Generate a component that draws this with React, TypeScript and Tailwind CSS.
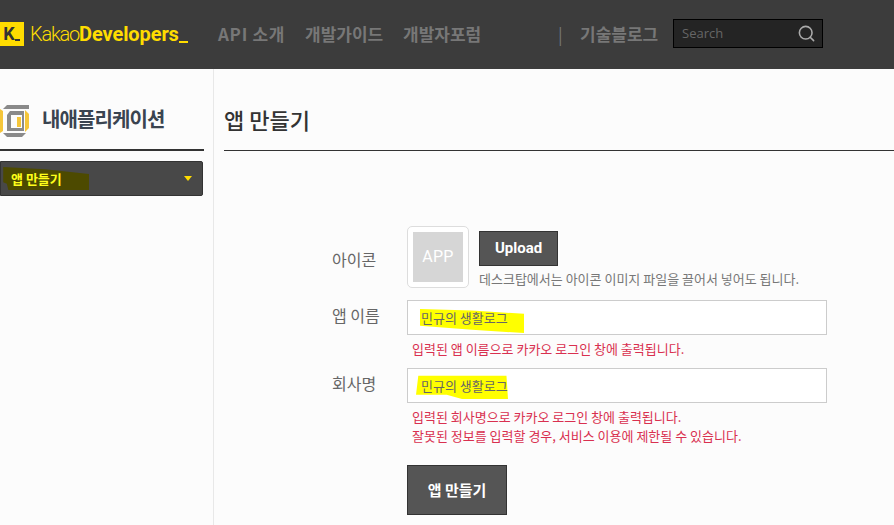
import { Search } from "lucide-react";

const kr = "font-['Noto_Sans_CJK_KR','Noto_Sans',sans-serif]";

function Highlight({ className, points, fill }: { className: string; points: string; fill: string }) {
  return (
    <svg className={`absolute ${className}`} viewBox="0 0 120 30" preserveAspectRatio="none">
      <polygon points={points} fill={fill} />
    </svg>
  );
}

function Header() {
  return (
    <header className="flex h-[69px] items-center bg-[#3c3c3c] pb-[2px]">
      <div className="relative flex h-6 w-6 items-center justify-center bg-[#ffdc00] pr-[6px] text-[18px] leading-none font-bold text-[#333] font-['Roboto',sans-serif]">
        K
        <span className="absolute right-1 bottom-[5px] h-[2px] w-[5px] bg-[#333]" />
      </div>
      <div className="ml-[6px] flex w-[158px] items-baseline text-[20px] leading-none text-[#ffdc00] font-['Roboto',sans-serif]">
        <span className="font-light tracking-[-1.2px]">Kakao</span>
        <span className="font-bold tracking-[-0.1px]">Developers</span>
        <span className="mt-auto mb-[1px] ml-auto h-[2px] w-[9px] bg-[#ffdc00]" />
      </div>
      <nav className={`mt-[1px] ml-[30px] flex items-center text-[17px] font-bold text-[#777] ${kr}`}>
        <span className="w-[87px] tracking-[0.7px]">API 소개</span>
        <span className="w-[98px]">개발가이드</span>
        <span className="w-[155px]">개발자포럼</span>
        <span className="w-[22px] font-normal">|</span>
        <span className="w-[93px]">기술블로그</span>
      </nav>
      <div className="flex h-[29px] w-[150px] items-center justify-between border border-black bg-[#242424] pr-[6px] pl-2 font-['Open_Sans',sans-serif] text-[13px] text-[#666]">
        Search
        <Search className="h-[19px] w-[19px] text-[#aaa]" strokeWidth={2} />
      </div>
    </header>
  );
}

function AppsIcon() {
  return (
    <svg className="h-8 w-[29px] shrink-0" viewBox="0 0 29 32">
      <path d="M3 4 L7 0 H29 V4 Z" fill="#8a8a8a" />
      <path d="M0 4 L3 6 V26 L0 28 Z" fill="#f5c63a" />
      <path d="M25 5 L29 9 V23 L25 27 Z" fill="#f5c63a" />
      <path fillRule="evenodd" d="M7 10 L10 6 H24 V26 H7 Z M11 10 V23 H22 V10 Z" fill="#8a8a8a" />
      <path d="M17 12 H21 V22 H17 Z" fill="#f5c63a" />
      <path d="M3 28 H26 L22 32 H7 Z" fill="#8a8a8a" />
    </svg>
  );
}

function Sidebar() {
  return (
    <aside className="h-[456px] w-[214px] shrink-0 border-r border-[#e8e8e8] pt-9">
      <div className="flex h-[46px] w-[204px] items-start border-b-2 border-[#333] pb-[2px]">
        <AppsIcon />
        <h2 className={`mt-[-2px] ml-[13px] text-[20px] leading-[32px] font-bold tracking-[-0.9px] text-[#3a4450] ${kr}`}>
          내애플리케이션
        </h2>
      </div>
      <div className="relative mt-[10px] flex h-[35px] w-[203px] items-center justify-between rounded-r-[2px] border border-[#333] bg-[#484848] pr-[10px] pl-[10px]">
        <Highlight className="top-[5px] left-0 h-[23px] w-[88px]" points="3,0 60,3 120,9 120,30 10,30 8,22 3,20" fill="#4d4a00" />
        <span className={`relative text-[13px] font-bold text-[#ffff1a] ${kr}`}>앱 만들기</span>
        <span className="h-0 w-0 border-x-[4.5px] border-t-[5px] border-x-transparent border-t-[#ffdc00]" />
      </div>
    </aside>
  );
}

function FormRow({ label, labelTop, children }: { label: string; labelTop: string; children: React.ReactNode }) {
  return (
    <div className="flex">
      <div className={`w-[75px] shrink-0 text-[16px] text-[#666] ${labelTop} ${kr}`}>{label}</div>
      <div className="min-w-0 flex-1">{children}</div>
    </div>
  );
}

function NameInput({ highlight }: { highlight: "a" | "b" }) {
  return (
    <div className="relative flex h-[35px] items-center border border-[#ccc] bg-white pl-[13px] text-[13px] text-[#666]">
      {highlight === "a" ? (
        <Highlight className="top-[8px] left-[12px] h-[24px] w-[104px]" points="0,0 60,2 120,6 120,30 60,26 0,21" fill="#ffff00" />
      ) : (
        <Highlight className="top-[5px] left-[8px] h-[25px] w-[92px]" points="3,2 118,2 120,30 60,30 40,25 0,25" fill="#ffff00" />
      )}
      <span className={`relative ${kr}`}>민규의 생활로그</span>
    </div>
  );
}

function Main() {
  return (
    <main className="min-w-0 flex-1">
      <div className="mt-[35px] ml-[10px] h-[47px] border-b border-[#333]">
        <h1 className={`text-[22px] leading-[30px] font-medium text-[#333] ${kr}`}>앱 만들기</h1>
      </div>
      <div className="mt-[75px] ml-[118px] w-[495px]">
        <FormRow label="아이콘" labelTop="pt-[21px]">
          <div className="flex gap-[10px]">
            <div className="flex h-[62px] w-[62px] items-center justify-center rounded-[5px] border border-[#ddd] bg-white">
              <div className="flex h-[50px] w-[50px] items-center justify-center bg-[#d6d6d6] font-['Roboto',sans-serif] text-[16px] tracking-[0.3px] text-white">
                APP
              </div>
            </div>
            <div className="pt-[5px]">
              <div className="flex h-[35px] w-[79px] items-center justify-center border border-[#333] bg-[#555] font-['Roboto',sans-serif] text-[15px] font-bold text-white">
                Upload
              </div>
              <p className={`mt-[3px] text-[13px] leading-[20px] whitespace-nowrap text-[#777] ${kr}`}>
                데스크탑에서는 아이콘 이미지 파일을 끌어서 넣어도 됩니다.
              </p>
            </div>
          </div>
        </FormRow>
        <div className="mt-[11px]">
          <FormRow label="앱 이름" labelTop="pt-[3px]">
            <NameInput highlight="a" />
            <p className={`mt-[4px] ml-[5px] text-[13px] leading-[20px] text-[#d9304f] ${kr}`}>
              입력된 앱 이름으로 카카오 로그인 창에 출력됩니다.
            </p>
          </FormRow>
        </div>
        <div className="mt-[9px]">
          <FormRow label="회사명" labelTop="pt-[3px]">
            <NameInput highlight="b" />
            <p className={`mt-[4px] ml-[5px] text-[13px] leading-[19px] text-[#d9304f] ${kr}`}>
              입력된 회사명으로 카카오 로그인 창에 출력됩니다.
              <br />
              잘못된 정보를 입력할 경우, 서비스 이용에 제한될 수 있습니다.
            </p>
            <button className={`mt-[20px] block h-[50px] w-[100px] border border-[#333] bg-[#555] text-[15px] font-bold text-white ${kr}`}>
              앱 만들기
            </button>
          </FormRow>
        </div>
      </div>
    </main>
  );
}

export default function App() {
  return (
    <div className="h-[525px] w-[894px] overflow-hidden bg-[#fcfcfc]">
      <Header />
      <div className="flex">
        <Sidebar />
        <Main />
      </div>
    </div>
  );
}
